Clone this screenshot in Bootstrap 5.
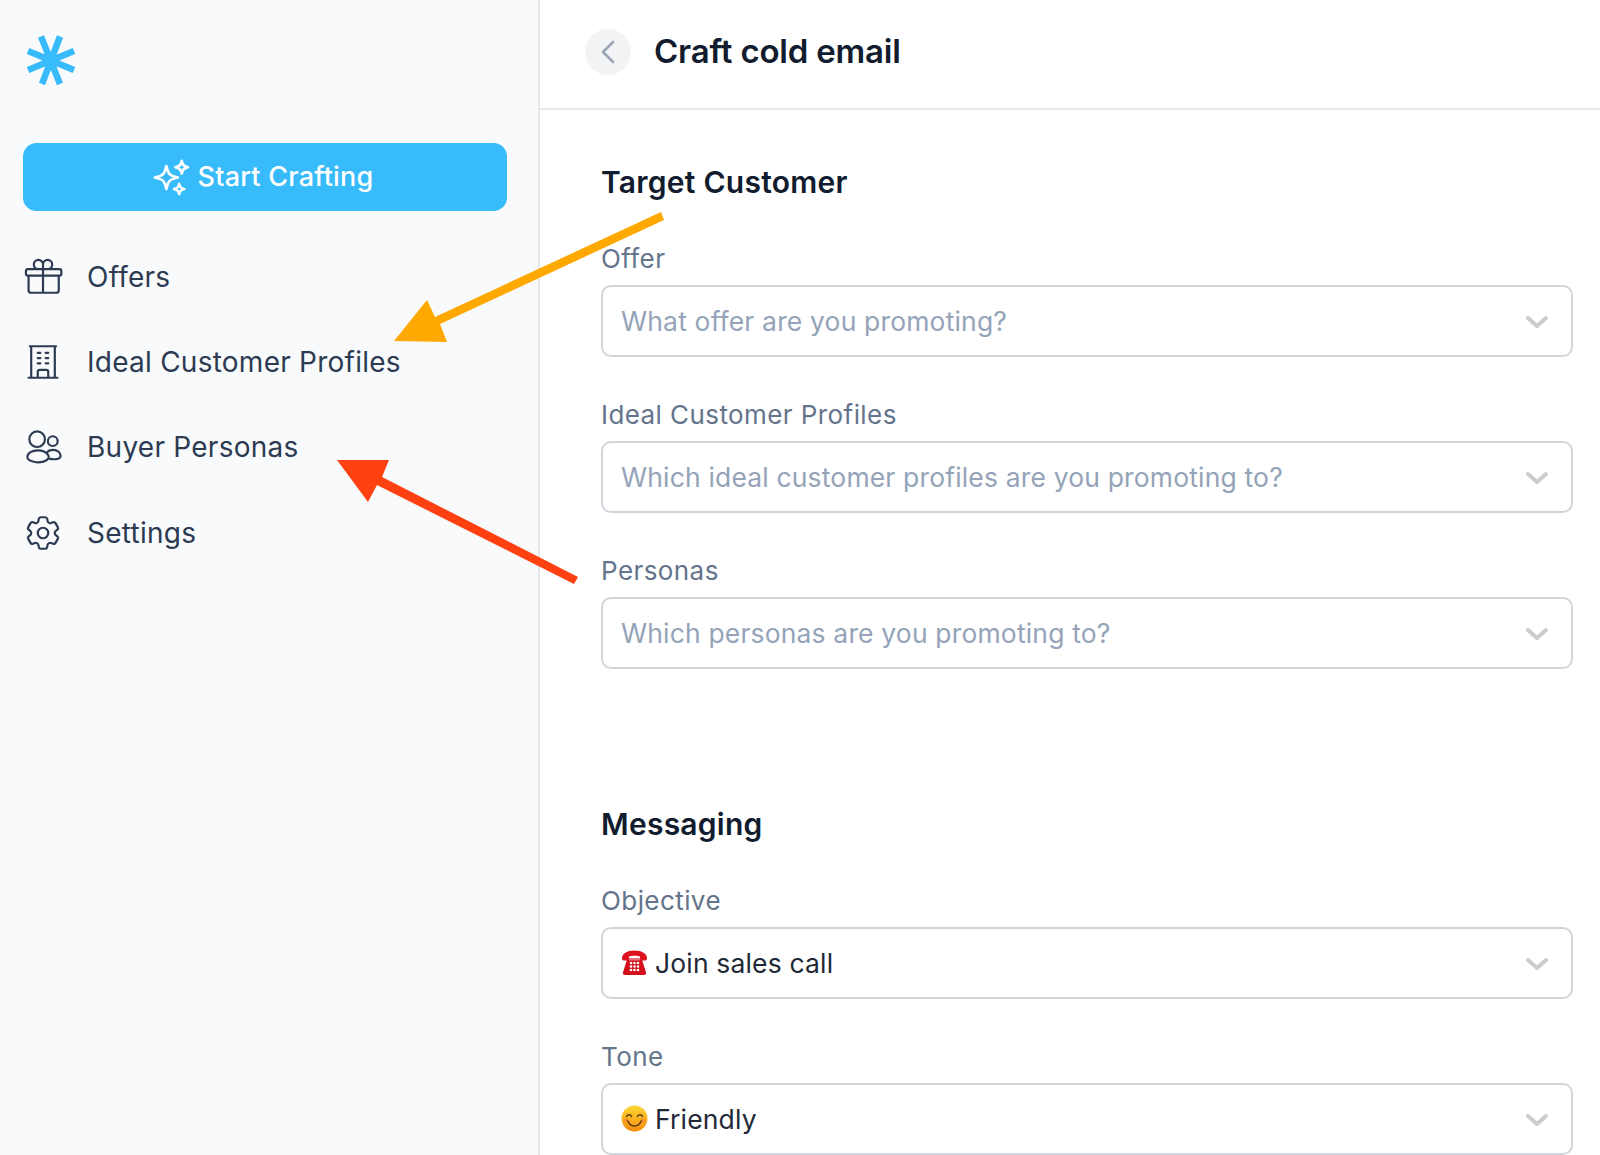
<!DOCTYPE html>
<html lang="en">
<head>
<meta charset="utf-8">
<title>Craft cold email</title>
<link href="https://cdn.jsdelivr.net/npm/bootstrap@5.3.0/dist/css/bootstrap.min.css" rel="stylesheet">
<style>
html,body{height:1155px;overflow:hidden}
body{font-family:Inter,"Liberation Sans",sans-serif;background:#fff;position:relative}
.app-shell{height:1155px}
.side-rail{width:540px;flex:none;background:#f9fafc;border-right:2px solid #e5e7eb;padding:0 31px 0 23px}
.logo-box{height:143px;padding-top:23px;margin-left:-2px}
.craft-btn{height:68px;background:#38bbfb;border:1px solid #38bbfb;color:#fff;font-size:27px;font-weight:500;border-radius:13px;gap:6px;letter-spacing:.2px;padding:0 18px 0 12px}
.craft-btn:hover{background:#38bbfb;color:#fff}
.side-links{margin-top:23px}
.side-item{height:85.4px;color:#2c3b52;font-size:28px;gap:23px;letter-spacing:.25px;text-decoration:none;margin-left:-1px}
.side-item svg{flex:none;stroke:#2c3b52}
.main-pane{min-width:0}
.top-strip{height:110px;border-bottom:2px solid #e5e7eb;padding:0 0 4px 45px;gap:23px}
.back-dot{width:46px;height:46px;background:#f1f3f5;border:0;padding:0}
.page-name{font-size:33px;font-weight:600;color:#111c2e;margin:0;letter-spacing:-.2px}
.form-body{padding:52px 27px 0 61px}
.block-name{font-size:30px;line-height:40px;font-weight:600;color:#111c2e;margin:0 0 38px;letter-spacing:.25px}
.field-name{font-size:26px;line-height:38px;color:#64748b;margin:0 0 7px;display:block;letter-spacing:.42px}
.field-wrap{margin-bottom:39px}
.section-gap{margin-bottom:135px}
.picker{height:72px;display:flex;align-items:center;gap:7px;font-size:26.5px;padding:2px 60px 0 18px;border:2px solid #d1d5db;border-radius:10px;color:#1f2937;letter-spacing:.16px;background-size:24px 14px;background-position:right 22px top 28px;background-image:url("data:image/svg+xml,%3csvg xmlns='http://www.w3.org/2000/svg' viewBox='0 0 24 14'%3e%3cpath fill='none' stroke='%23cccccc' stroke-width='4' stroke-linecap='round' stroke-linejoin='round' d='M3 3l9 8 9-8'/%3e%3c/svg%3e")}
.picker.is-empty{color:#94a3b8}
.picker svg{flex:none;margin-top:-4px}
.arrow-layer{position:absolute;left:0;top:0;pointer-events:none}
</style>
</head>
<body>
<div class="app-shell d-flex">
  <aside class="side-rail">
    <div class="logo-box">
      <svg width="72" height="72" viewBox="0 0 72 72" aria-hidden="true"><g stroke="#38bbfb" stroke-width="6.5" fill="none"><path d="M20 13.500L39 61M39 13.500L21 61M7 28L53 47M53 28L7 47"/></g></svg>
    </div>
    <a href="#" class="btn craft-btn w-100 d-flex align-items-center justify-content-center">
      <svg width="41" height="41" viewBox="0 0 24 24" fill="none" stroke="#fff" stroke-width="1.5" stroke-linecap="round" stroke-linejoin="round" aria-hidden="true"><path d="M9.813 15.904L9 18.75l-.813-2.846a4.5 4.5 0 00-3.09-3.09L2.25 12l2.846-.813a4.5 4.5 0 003.09-3.09L9 5.25l.813 2.846a4.5 4.5 0 003.09 3.09L15.75 12l-2.846.813a4.5 4.5 0 00-3.09 3.09zM18.259 8.715L18 9.75l-.259-1.035a3.375 3.375 0 00-2.455-2.456L14.25 6l1.036-.259a3.375 3.375 0 002.455-2.456L18 2.25l.259 1.035a3.375 3.375 0 002.456 2.456L21.75 6l-1.035.259a3.375 3.375 0 00-2.456 2.456zM16.894 20.567L16.5 21.750l-.394-1.183a2.25 2.25 0 00-1.423-1.423L13.5 18.75l1.183-.394a2.25 2.25 0 001.423-1.423l.394-1.183.394 1.183a2.25 2.25 0 001.423 1.423l1.183.394-1.183.394a2.25 2.25 0 00-1.423 1.423z"/></svg>
      <span>Start Crafting</span>
    </a>
    <nav class="side-links d-flex flex-column">
      <a href="#" class="side-item d-flex align-items-center">
        <svg width="42" height="42" viewBox="0 0 24 24" fill="none" stroke-width="1.25" stroke-linecap="round" stroke-linejoin="round" aria-hidden="true"><path d="M21 11.25v8.25a1.5 1.5 0 01-1.5 1.5H5.25a1.5 1.5 0 01-1.5-1.5v-8.25M12 4.875A2.625 2.625 0 109.375 7.5H12m0-2.625V7.500m0-2.625A2.625 2.625 0 1114.625 7.5H12m0 0V21m-8.625-9.75h18c.621 0 1.125-.504 1.125-1.125v-1.5c0-.621-.504-1.125-1.125-1.125h-18c-.621 0-1.125.504-1.125 1.125v1.5c0 .621.504 1.125 1.125 1.125z"/></svg>
        <span>Offers</span>
      </a>
      <a href="#" class="side-item d-flex align-items-center">
        <svg width="42" height="42" viewBox="0 0 24 24" fill="none" stroke-width="1.25" stroke-linecap="round" stroke-linejoin="round" aria-hidden="true"><path d="M3.750 21h16.500M4.500 3h15M5.250 3v18m13.500-18v18M9 6.750h1.500m-1.500 3h1.500m-1.500 3h1.500m3-6H15m-1.500 3H15m-1.500 3H15M9 21v-3.375c0-.621.504-1.125 1.125-1.125h3.750c.621 0 1.125.504 1.125 1.125V21"/></svg>
        <span>Ideal Customer Profiles</span>
      </a>
      <a href="#" class="side-item d-flex align-items-center">
        <svg width="42" height="42" viewBox="0 0 43 43" fill="none" stroke-width="2.2" stroke-linecap="round" stroke-linejoin="round" aria-hidden="true"><circle cx="15.500" cy="13.500" r="8"/><circle cx="31.500" cy="15.500" r="5"/><path d="M5.500 32c0-4.500 5-7 10.500-7s9 2 11 5c1.500 2.500-1 5.500-5 6.500-2.500.7-5 .8-7.500.6C9 36.200 5.500 35 5.500 32z"/><path d="M26 26.500c1.500-1.500 3.500-2 6-2 4.500 0 7.500 3 7.500 6 0 2.500-2.500 3.500-6 3.500-1.500 0-3.500 0-5-.3"/></svg>
        <span>Buyer Personas</span>
      </a>
      <a href="#" class="side-item d-flex align-items-center">
        <svg width="42" height="42" viewBox="0 0 24 24" fill="none" stroke-width="1.25" stroke-linecap="round" stroke-linejoin="round" aria-hidden="true"><path d="M9.594 3.94c.09-.542.56-.94 1.11-.94h2.593c.55 0 1.02.398 1.11.94l.213 1.281c.063.374.313.686.645.87.074.04.147.083.22.127.324.196.72.257 1.075.124l1.217-.456a1.125 1.125 0 011.37.49l1.296 2.247a1.125 1.125 0 01-.26 1.431l-1.003.827c-.293.24-.438.613-.431.992a6.759 6.759 0 010 .255c-.007.378.138.75.43.99l1.005.828c.424.35.534.954.26 1.43l-1.298 2.247a1.125 1.125 0 01-1.369.491l-1.217-.456c-.355-.133-.75-.072-1.076.124a6.57 6.57 0 01-.22.128c-.331.183-.581.495-.644.869l-.213 1.28c-.09.543-.56.941-1.11.941h-2.594c-.55 0-1.02-.398-1.11-.94l-.213-1.281c-.062-.374-.312-.686-.644-.87a6.52 6.52 0 01-.22-.127c-.325-.196-.72-.257-1.076-.124l-1.217.456a1.125 1.125 0 01-1.369-.49l-1.297-2.247a1.125 1.125 0 01.26-1.431l1.004-.827c.292-.24.437-.613.43-.992a6.932 6.932 0 010-.255c.007-.378-.138-.75-.43-.99l-1.004-.828a1.125 1.125 0 01-.26-1.43l1.297-2.247a1.125 1.125 0 011.37-.491l1.216.456c.356.133.751.072 1.076-.124.072-.044.146-.087.22-.128.332-.183.582-.495.644-.869l.214-1.281z"/><path d="M15 12a3 3 0 11-6 0 3 3 0 016 0z"/></svg>
        <span>Settings</span>
      </a>
    </nav>
  </aside>
  <main class="main-pane flex-grow-1">
    <header class="top-strip d-flex align-items-center">
      <button type="button" class="back-dot rounded-circle d-flex align-items-center justify-content-center" aria-label="Back">
        <svg width="14" height="24" viewBox="0 0 14 24" fill="none" stroke="#9aa5b4" stroke-width="2.6" stroke-linecap="round" stroke-linejoin="round" aria-hidden="true"><path d="M12 2L2 12l10 10"/></svg>
      </button>
      <h1 class="page-name">Craft cold email</h1>
    </header>
    <div class="form-body">
      <section class="section-gap">
        <h2 class="block-name">Target Customer</h2>
        <div class="field-wrap"><span class="field-name">Offer</span><div class="form-select picker is-empty">What offer are you promoting?</div></div>
        <div class="field-wrap"><span class="field-name">Ideal Customer Profiles</span><div class="form-select picker is-empty">Which ideal customer profiles are you promoting to?</div></div>
        <div class="field-wrap"><span class="field-name">Personas</span><div class="form-select picker is-empty">Which personas are you promoting to?</div></div>
      </section>
      <section>
        <h2 class="block-name">Messaging</h2>
        <div class="field-wrap"><span class="field-name">Objective</span><div class="form-select picker">
          <svg width="27" height="27" viewBox="0 0 27 27" aria-hidden="true"><path d="M1 9c0-4 5-7.500 12.500-7.500S26 5 26 9c0 1.500-.5 2.500-1.500 2.500h-4c-1 0-1.500-1-1.500-2V7.500c-1.500-.6-3.300-.8-5.500-.8s-4 .2-5.500.8V9.500c0 1-.5 2-1.500 2h-4C1.500 11.500 1 10.500 1 9z" fill="#e0111f"/><path d="M6 10.500h15l4 13c.3 1.200-.3 2.500-1.800 2.500H3.800C2.300 26 1.700 24.700 2 23.500z" fill="#d40f1c"/><rect x="8" y="9" width="11" height="2.500" fill="#e8707a"/><g fill="#fff"><circle cx="10" cy="14" r="1.300"/><circle cx="13.500" cy="14" r="1.300"/><circle cx="17" cy="14" r="1.300"/><circle cx="10" cy="17.500" r="1.300"/><circle cx="13.500" cy="17.500" r="1.300"/><circle cx="17" cy="17.500" r="1.300"/><circle cx="10" cy="21" r="1.300"/><circle cx="13.500" cy="21" r="1.300"/><circle cx="17" cy="21" r="1.300"/></g></svg>
          <span>Join sales call</span></div></div>
        <div class="field-wrap"><span class="field-name">Tone</span><div class="form-select picker">
          <svg width="27" height="27" viewBox="0 0 27 27" aria-hidden="true"><defs><linearGradient id="smileFill" x1="0" y1="0" x2="0" y2="1"><stop offset="0" stop-color="#fdd835"/><stop offset="1" stop-color="#f78c0c"/></linearGradient></defs><circle cx="13.500" cy="13.500" r="13" fill="url(#smileFill)"/><path d="M5.500 11.500c1-2.300 4-2.300 5 0M16.500 11.500c1-2.300 4-2.300 5 0" fill="none" stroke="#5b3a12" stroke-width="1.500" stroke-linecap="round"/><path d="M6.500 15.500c1.500 4 4 5.500 7 5.500s5.500-1.500 7-5.500" fill="none" stroke="#5b3a12" stroke-width="1.500" stroke-linecap="round"/><circle cx="5" cy="15.500" r="2.300" fill="#f4763a" opacity=".45"/><circle cx="22" cy="15.500" r="2.300" fill="#f4763a" opacity=".45"/></svg>
          <span>Friendly</span></div></div>
      </section>
    </div>
  </main>
</div>
<svg class="arrow-layer" width="1600" height="1155" viewBox="0 0 1600 1155" aria-hidden="true">
  <polygon points="661,212 664,220 440,324 447,342 394,341 427,300 435,317" fill="#ffa800"/>
  <polygon points="578,577 574,584 377,485 368,502 337,460 389,460 382,477" fill="#ff4112"/>
</svg>
<script src="https://cdn.jsdelivr.net/npm/bootstrap@5.3.0/dist/js/bootstrap.bundle.min.js"></script>
</body>
</html>
